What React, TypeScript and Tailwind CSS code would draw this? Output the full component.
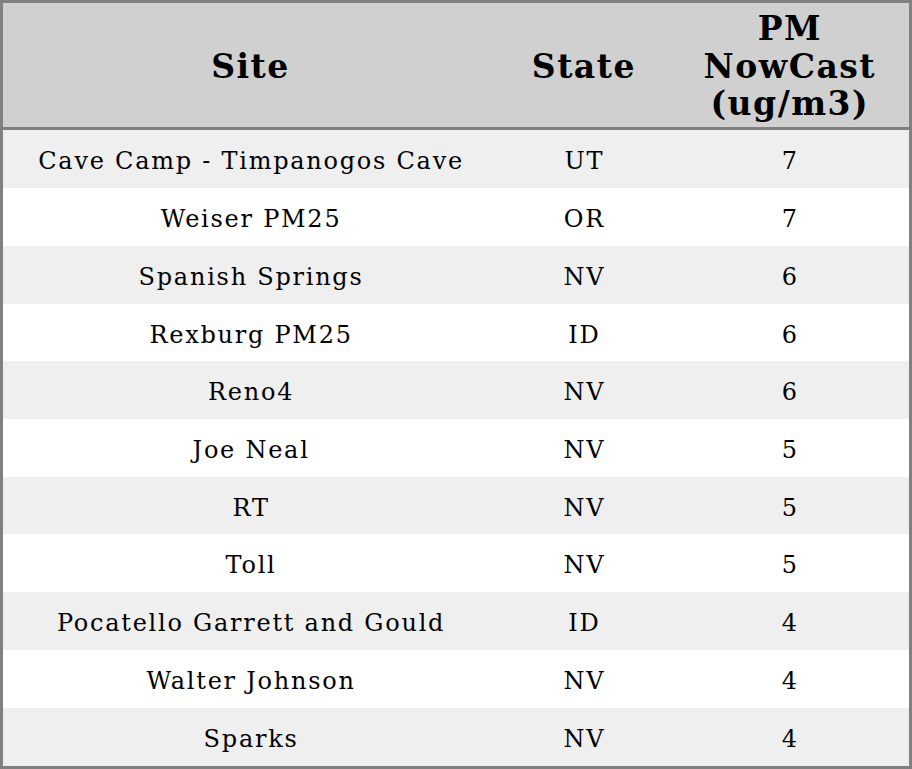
import React from "react";

const rows: [string, string, string][] = [
  ["Cave Camp - Timpanogos Cave", "UT", "7"],
  ["Weiser PM25", "OR", "7"],
  ["Spanish Springs", "NV", "6"],
  ["Rexburg PM25", "ID", "6"],
  ["Reno4", "NV", "6"],
  ["Joe Neal", "NV", "5"],
  ["RT", "NV", "5"],
  ["Toll", "NV", "5"],
  ["Pocatello Garrett and Gould", "ID", "4"],
  ["Walter Johnson", "NV", "4"],
  ["Sparks", "NV", "4"],
];

export default function App() {
  return (
    <div className="w-[912px] h-[769px] bg-white" style={{ fontFamily: '"DejaVu Serif", serif' }}>
      <table className="w-full h-full border-[3px] border-[#808080] border-collapse table-fixed text-black">
        <colgroup>
          <col className="w-[494px]" />
          <col className="w-[172px]" />
          <col className="w-[240px]" />
        </colgroup>
        <thead>
          <tr className="bg-[#d0d0d0] h-[127px] border-b-[3px] border-[#808080]">
            <th className="text-[33px] leading-[37.5px] tracking-[1.5px] font-bold text-center pt-[3px] pl-[1px]">Site</th>
            <th className="text-[33px] leading-[37.5px] tracking-[1.5px] font-bold text-center pt-[3px] pl-[1px]">State</th>
            <th className="text-[33px] leading-[37.5px] tracking-[1.5px] font-bold text-center pt-[3px] pl-[1px]">PM<br />NowCast<br />(ug/m3)</th>
          </tr>
        </thead>
        <tbody>
          {rows.map((r, i) => (
            <tr key={i} className={i % 2 === 0 ? "bg-[#efefef]" : "bg-white"}>
              <td className="text-[24px] tracking-[1.75px] text-center p-0 pt-[4px] pl-[2px]">{r[0]}</td>
              <td className="text-[24px] tracking-[1.75px] text-center p-0 pt-[4px] pl-[2px]">{r[1]}</td>
              <td className="text-[24px] tracking-[1.75px] text-center p-0 pt-[4px] pl-[2px]">{r[2]}</td>
            </tr>
          ))}
        </tbody>
      </table>
    </div>
  );
}
